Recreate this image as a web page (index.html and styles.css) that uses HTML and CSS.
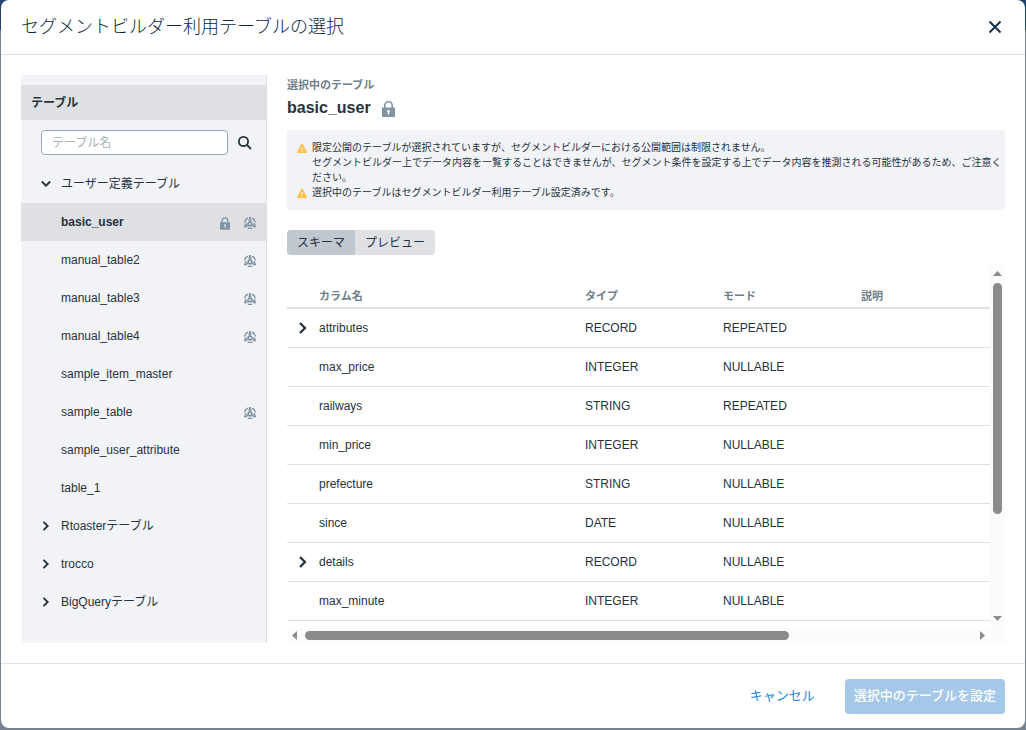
FILE: index.html
```
<!DOCTYPE html>
<html lang="ja">

<head>
  <meta charset="utf-8">
  <title>セグメントビルダー利用テーブルの選択</title>
  <link rel="stylesheet" href="styles.css">
</head>

<body>
<svg class="defs" width="0" height="0">
  <symbol id="lock" viewBox="0 0 13 16">
    <path fill="none" stroke="currentColor" stroke-width="1.600" d="M2.800 7V4.500a3.700 3.700 0 0 1 7.400 0V7"/>
    <path fill="currentColor" fill-rule="evenodd" d="M0 6.500h13V16H0zM6.500 9a1.400 1.400 0 0 0-.7 2.600v2h1.400v-2A1.400 1.400 0 0 0 6.500 9z"/>
  </symbol>
  <symbol id="segment" viewBox="0 0 12 12">
    <g fill="none" stroke="currentColor">
      <path stroke-width="1.300" d="M.7 5.500A5.400 5.400 0 0 1 4 1.200M8 1.200a5.400 5.400 0 0 1 3.300 4.300M3.800 11.200a5 5 0 0 0 4.400 0"/>
      <circle cx="6" cy="7" r="1.900" stroke-width="1.600"/>
      <path stroke-width="1" d="M6 3.500V5M4.400 8L3 8.700M7.600 8l1.400.7"/>
    </g>
    <path fill="currentColor" d="M5 0h2v2H5zM4.500 2.200h3v1.800h-3zM.6 6.500h2.200v1.700H.6zM0 8.600h3.300v1.700H0zM9.200 6.500h2.200v1.700H9.200zM8.700 8.600H12v1.700H8.700z"/>
  </symbol>
  <symbol id="chevron" viewBox="0 0 10 12">
    <path fill="none" stroke="currentColor" stroke-width="2.300" d="M2 1l5 5-5 5"/>
  </symbol>
  <symbol id="warning" viewBox="0 0 10 10">
    <path fill="#fbc04d" d="M5 .5q.5 0 .8.500L9.900 9q.3.900-.6.900H.7Q-.2 9.900.1 9L4.200 1Q4.500.5 5 .5z"/>
    <path fill="#fff" d="M4.500 4h1v2.800h-1zM4.500 7.600h1v1h-1z"/>
  </symbol>
</svg>

<div class="modal" role="dialog" aria-labelledby="modal-title">
  <header class="modal-header">
    <h1 id="modal-title">セグメントビルダー利用テーブルの選択</h1>
    <button class="close" type="button" aria-label="閉じる">
      <svg width="14" height="14" viewBox="0 0 14 14"><path fill="none" stroke="currentColor" stroke-width="2" d="M1.500 1.500l11 11M12.500 1.500l-11 11"/></svg>
    </button>
  </header>

  <div class="modal-body">
    <nav class="sidebar">
      <h2 class="sidebar-title">テーブル</h2>
      <form class="search">
        <input type="text" placeholder="テーブル名" aria-label="テーブル名">
        <button type="button" aria-label="検索">
          <svg width="14" height="14" viewBox="0 0 14 14"><g fill="none" stroke="currentColor" stroke-width="1.800"><circle cx="5.500" cy="5.500" r="4.600"/><path d="M8.900 8.900l4.100 4.100"/></g></svg>
        </button>
      </form>
      <ul class="tree">
        <li><button class="group open" type="button"><svg class="chevron"><use href="#chevron"/></svg>ユーザー定義テーブル</button></li>
        <li><button class="item selected" type="button"><span>basic_user</span><svg class="icon-lock"><use href="#lock"/></svg><svg class="icon-segment"><use href="#segment"/></svg></button></li>
        <li><button class="item" type="button"><span>manual_table2</span><svg class="icon-segment"><use href="#segment"/></svg></button></li>
        <li><button class="item" type="button"><span>manual_table3</span><svg class="icon-segment"><use href="#segment"/></svg></button></li>
        <li><button class="item" type="button"><span>manual_table4</span><svg class="icon-segment"><use href="#segment"/></svg></button></li>
        <li><button class="item" type="button"><span>sample_item_master</span></button></li>
        <li><button class="item" type="button"><span>sample_table</span><svg class="icon-segment"><use href="#segment"/></svg></button></li>
        <li><button class="item" type="button"><span>sample_user_attribute</span></button></li>
        <li><button class="item" type="button"><span>table_1</span></button></li>
        <li><button class="group" type="button"><svg class="chevron"><use href="#chevron"/></svg>Rtoasterテーブル</button></li>
        <li><button class="group" type="button"><svg class="chevron"><use href="#chevron"/></svg>trocco</button></li>
        <li><button class="group" type="button"><svg class="chevron"><use href="#chevron"/></svg>BigQueryテーブル</button></li>
      </ul>
    </nav>

    <section class="detail">
      <p class="caption">選択中のテーブル</p>
      <h2 class="table-name">basic_user <svg><use href="#lock"/></svg></h2>

      <ul class="notice">
        <li><svg><use href="#warning"/></svg><p>限定公開のテーブルが選択されていますが、セグメントビルダーにおける公開範囲は制限されません。<br>セグメントビルダー上でデータ内容を一覧することはできませんが、セグメント条件を設定する上でデータ内容を推測される可能性があるため、ご注意ください。</p></li>
        <li><svg><use href="#warning"/></svg><p>選択中のテーブルはセグメントビルダー利用テーブル設定済みです。</p></li>
      </ul>

      <div class="tabs">
        <button class="active" type="button">スキーマ</button>
        <button type="button">プレビュー</button>
      </div>

      <div class="scroll-box">
        <div class="scroll-view">
          <table class="schema">
            <thead>
              <tr><th class="toggle"></th><th class="name">カラム名</th><th class="type">タイプ</th><th class="mode">モード</th><th>説明</th></tr>
            </thead>
            <tbody>
              <tr><td class="toggle"><svg class="chevron"><use href="#chevron"/></svg></td><td>attributes</td><td>RECORD</td><td>REPEATED</td><td></td></tr>
              <tr><td></td><td>max_price</td><td>INTEGER</td><td>NULLABLE</td><td></td></tr>
              <tr><td></td><td>railways</td><td>STRING</td><td>REPEATED</td><td></td></tr>
              <tr><td></td><td>min_price</td><td>INTEGER</td><td>NULLABLE</td><td></td></tr>
              <tr><td></td><td>prefecture</td><td>STRING</td><td>NULLABLE</td><td></td></tr>
              <tr><td></td><td>since</td><td>DATE</td><td>NULLABLE</td><td></td></tr>
              <tr><td class="toggle"><svg class="chevron"><use href="#chevron"/></svg></td><td>details</td><td>RECORD</td><td>NULLABLE</td><td></td></tr>
              <tr><td></td><td>max_minute</td><td>INTEGER</td><td>NULLABLE</td><td></td></tr>
            </tbody>
          </table>
        </div>
        <div class="bar-y">
          <svg width="9" height="5"><path d="M0 5L4.500 0 9 5z"/></svg>
          <div class="track"><div class="thumb"></div></div>
          <svg width="9" height="5"><path d="M0 0L4.500 5 9 0z"/></svg>
        </div>
        <div class="bar-x">
          <svg width="5" height="9"><path d="M5 0L0 4.500 5 9z"/></svg>
          <div class="track"><div class="thumb"></div></div>
          <svg width="5" height="9"><path d="M0 0l5 4.500L0 9z"/></svg>
        </div>
        <div class="corner"></div>
      </div>
    </section>
  </div>

  <footer class="modal-footer">
    <button class="cancel" type="button">キャンセル</button>
    <button class="submit" type="button" disabled>選択中のテーブルを設定</button>
  </footer>
</div>
</body>

</html>
```
FILE: styles.css
```
* {
  box-sizing: border-box;
}

body {
  margin: 0;
  padding: 0 1px 2px;
  height: 100vh;
  background: linear-gradient(#24456b 30px, #77838f 30px);
  color: #26323d;
  font: 12px/18px "Liberation Sans", "Noto Sans CJK JP", sans-serif;
}

h1, h2, p, ul {
  margin: 0;
  padding: 0;
}

ul {
  list-style: none;
}

button {
  padding: 0;
  border: 0;
  background: none;
  color: inherit;
  font: inherit;
}

svg {
  display: block;
  flex: none;
}

.defs {
  position: absolute;
}

.modal {
  display: flex;
  flex-direction: column;
  height: 100%;
  border-radius: 8px;
  background: #fff;
  overflow: hidden;
}

.modal-header {
  display: flex;
  align-items: center;
  justify-content: space-between;
  height: 55px;
  padding: 0 23px 0 20px;
  border-bottom: 1px solid #dfe1e5;
}

.modal-header h1 {
  color: #0c2540;
  font-size: 18px;
  font-weight: 300;
  line-height: 26px;
}

.close {
  color: #12304f;
}

.modal-body {
  display: flex;
  flex: 1;
  gap: 20px;
  min-height: 0;
  padding: 20px;
}

/* список таблиц */
.sidebar {
  flex: none;
  width: 246px;
  padding-top: 10px;
  border-right: 1px solid #dcdee3;
  background: #f2f3f7;
}

.sidebar-title {
  padding: 1px 10px 0;
  background: #dfe0e4;
  font-size: 12px;
  line-height: 34px;
}

.search {
  display: flex;
  align-items: center;
  gap: 10px;
  padding: 10px 14px 10px 20px;
}

.search input {
  flex: 1;
  min-width: 0;
  height: 25px;
  padding: 0 10px;
  border: 1px solid #98a5b1;
  border-radius: 4px;
  background: #fff;
  font: inherit;
}

.search input::placeholder {
  color: #a9b2ba;
}

.group,
.item {
  display: flex;
  align-items: center;
  width: 100%;
  height: 38px;
  text-align: left;
}

.group {
  gap: 10px;
  padding-left: 20px;
}

.chevron {
  width: 10px;
  height: 12px;
}

.group .chevron {
  height: 10px;
}

.open .chevron {
  transform: rotate(90deg);
}

.item {
  gap: 14px;
  padding: 2px 10px 0 40px;
}

.item span {
  flex: 1;
  padding-bottom: 2px;
}

.selected {
  background: #dfe0e4;
  font-weight: bold;
}

.icon-lock,
.icon-segment {
  color: #8293a2;
}

.icon-lock {
  width: 10px;
  height: 13px;
}

.icon-segment {
  width: 12px;
  height: 12px;
}

/* выбранная таблица */
.detail {
  display: flex;
  flex: 1;
  flex-direction: column;
  min-width: 0;
}

.caption {
  padding-top: 1px;
  color: #6f7f8b;
  font-size: 11px;
  font-weight: bold;
}

.table-name {
  display: flex;
  align-items: center;
  gap: 11px;
  padding: 2px 0 10px;
  font-size: 16px;
  line-height: 24px;
}

.table-name svg {
  width: 13px;
  height: 16px;
  margin-top: 2px;
  color: #8293a2;
}

.notice {
  padding: 10px 0 10px 10px;
  border-radius: 2px;
  background: #f2f3f7;
  font-size: 10px;
  line-height: 15px;
}

.notice li {
  display: flex;
  gap: 5px;
}

.notice svg {
  width: 10px;
  height: 10px;
  margin-top: 3px;
}

.tabs {
  display: flex;
  align-self: flex-start;
  margin: 20px 0 10px;
  border-radius: 4px;
  background: #dfe1e5;
  overflow: hidden;
}

.tabs button {
  height: 25px;
  padding: 0 10px;
}

.tabs .active {
  background: #c1c7cf;
}

.scroll-box {
  display: grid;
  flex: 1;
  grid-template: minmax(0, 1fr) 15px / minmax(0, 1fr) 15px;
  min-height: 0;
}

.scroll-view {
  overflow: hidden;
}

.schema {
  width: 1000px;
  border-collapse: separate;
  border-spacing: 0;
  table-layout: fixed;
}

.schema th,
.schema td {
  height: 39px;
  padding: 0;
  border-bottom: 1px solid #dfe1e5;
  text-align: left;
}

.schema th {
  height: 44px;
  padding-top: 20px;
  border-bottom-width: 2px;
  color: #6f7f8b;
  font-size: 11px;
}

.schema .toggle {
  width: 32px;
  padding-left: 11px;
}

.schema .name {
  width: 266px;
}

.schema .type,
.schema .mode {
  width: 138px;
}

/* полосы прокрутки */
.bar-y,
.bar-x,
.corner {
  background: #fcfcfc;
  fill: #8b8b8b;
}

.bar-y,
.bar-x {
  display: flex;
  align-items: center;
  justify-content: space-between;
  gap: 8px;
  padding: 5px;
}

.bar-y {
  flex-direction: column;
  gap: 7px;
  padding: 6px 0 7px;
}

.track {
  flex: 1;
}

.thumb {
  border-radius: 5px;
  background: #8b8b8b;
}

.bar-y .thumb {
  width: 9px;
  height: 100%;
}

.bar-y .track {
  height: 0;
  padding-bottom: 95px;
}

.bar-x .thumb {
  width: 72.500%;
  height: 9px;
}

.modal-footer {
  display: flex;
  align-items: center;
  justify-content: flex-end;
  gap: 30px;
  height: 65px;
  padding: 0 20px;
  border-top: 1px solid #dfe1e5;
  font-size: 13px;
}

.cancel {
  color: #2b87d3;
}

.submit {
  height: 35px;
  padding: 0 9px;
  border-radius: 4px;
  background: #a5c8e8;
  color: #fff;
  font-weight: 500;
}
```
